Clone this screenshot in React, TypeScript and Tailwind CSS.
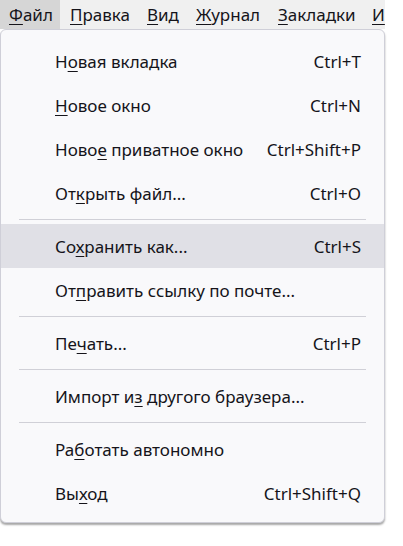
import React from 'react';

type Item = {
  pre: string;
  key: string;
  post: string;
  shortcut?: string;
  active?: boolean;
};

type Entry = Item | 'sep';

const entries: Entry[] = [
  { pre: 'Н', key: 'о', post: 'вая вкладка', shortcut: 'Ctrl+T' },
  { pre: '', key: 'Н', post: 'овое окно', shortcut: 'Ctrl+N' },
  { pre: 'Ново', key: 'е', post: ' приватное окно', shortcut: 'Ctrl+Shift+P' },
  { pre: 'От', key: 'к', post: 'рыть файл...', shortcut: 'Ctrl+O' },
  'sep',
  { pre: 'Со', key: 'х', post: 'ранить как...', shortcut: 'Ctrl+S', active: true },
  { pre: 'От', key: 'п', post: 'равить ссылку по почте...' },
  'sep',
  { pre: 'Пе', key: 'ч', post: 'ать...', shortcut: 'Ctrl+P' },
  'sep',
  { pre: 'Импорт и', key: 'з', post: ' другого браузера...' },
  'sep',
  { pre: 'Ра', key: 'б', post: 'отать автономно' },
  { pre: 'Вы', key: 'х', post: 'од', shortcut: 'Ctrl+Shift+Q' },
];

const menubar = [
  { key: 'Ф', rest: 'айл', w: 'w-[60px] pl-[9px] bg-[#d6d6d6]' },
  { key: 'П', rest: 'равка', w: 'w-[77px] pl-[10px]' },
  { key: 'В', rest: 'ид', w: 'w-[49px] pl-[10px]' },
  { key: 'Ж', rest: 'урнал', w: 'w-[82px] pl-[10px]' },
  { key: 'З', rest: 'акладки', w: 'w-[94px] pl-[10px]' },
  { key: 'И', rest: 'нструменты', w: 'w-[120px] pl-[10px]' },
];

const Mnemonic: React.FC<{ pre: string; k: string; post: string }> = ({ pre, k, post }) => (
  <span>
    {pre}
    <span className="underline decoration-1 underline-offset-[3px]">{k}</span>
    {post}
  </span>
);

export default function App() {
  return (
    <div
      className="w-[403px] h-[546px] bg-white text-[#15141a] text-[17px] leading-none"
      style={{ fontFamily: '"Noto Sans", "Open Sans", sans-serif' }}
    >
      <div className="w-[385px] h-[29px] bg-[#f0f0f0] flex overflow-hidden whitespace-nowrap">
        {menubar.map((m) => (
          <div key={m.key} className={`${m.w} h-full flex items-center shrink-0`}>
            <Mnemonic pre="" k={m.key} post={m.rest} />
          </div>
        ))}
      </div>
      <div className="w-[385px] border border-[#cfcfd8] rounded-[6px] bg-[#f9f9fb] pt-[9px] pb-[7px] shadow-[0_2px_2px_rgba(0,0,0,0.35)]">
        {entries.map((e, i) =>
          e === 'sep' ? (
            <div key={i} className="py-[4px] px-[18px]">
              <div className="h-px bg-[#d0d0d7]" />
            </div>
          ) : (
            <div
              key={i}
              className={`h-[44px] flex items-center justify-between pl-[54px] pr-[23px] whitespace-nowrap ${
                e.active ? 'bg-[#e0e0e6]' : ''
              }`}
            >
              <Mnemonic pre={e.pre} k={e.key} post={e.post} />
              {e.shortcut && <span>{e.shortcut}</span>}
            </div>
          )
        )}
      </div>
    </div>
  );
}
